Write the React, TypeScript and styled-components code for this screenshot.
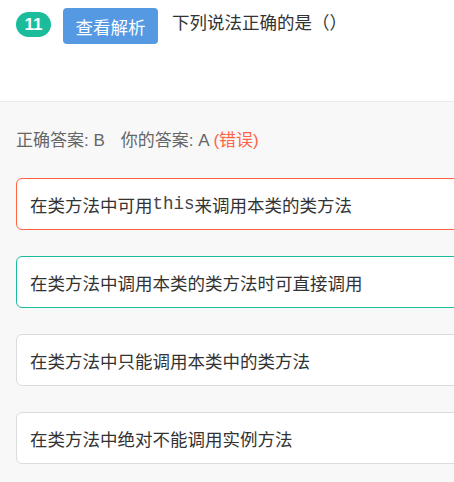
import React from "react";
import styled, { createGlobalStyle } from "styled-components";

const Global = createGlobalStyle`
  html, body {
    margin: 0;
    padding: 0;
    background: #ffffff;
    overflow: hidden;
  }
  body {
    font-family: "Liberation Sans", "Noto Sans CJK SC", sans-serif;
    color: #333333;
  }
`;

const Page = styled.div`
  width: 454px;
  height: 482px;
  overflow: hidden;
  display: flex;
  flex-direction: column;
`;

const Header = styled.div`
  height: 101px;
  box-sizing: border-box;
  display: flex;
  align-items: flex-start;
  padding: 8px 16px 0 16px;
  flex-shrink: 0;
`;

const Badge = styled.span`
  margin-top: 4px;
  width: 35px;
  height: 25px;
  border-radius: 13px;
  background: #1abc9c;
  color: #ffffff;
  font-family: "Liberation Sans", Arial, sans-serif;
  font-weight: bold;
  font-size: 17px;
  display: flex;
  align-items: center;
  justify-content: center;
  flex-shrink: 0;
`;

const ViewButton = styled.button`
  margin-left: 12px;
  width: 95px;
  height: 36px;
  border: none;
  border-radius: 4px;
  background: #5499e1;
  color: #ffffff;
  font-family: "Liberation Sans", "Noto Sans CJK SC", sans-serif;
  font-size: 17.5px;
  padding: 0;
  display: flex;
  align-items: center;
  justify-content: center;
  flex-shrink: 0;
`;

const Question = styled.div`
  margin-left: 14px;
  font-size: 17.5px;
  line-height: 30px;
  color: #333333;
  white-space: nowrap;
`;

const Body = styled.div`
  flex: 1;
  background: #f8f8f8;
  border-top: 1px solid #ebebeb;
  padding: 26px 0 0 16px;
`;

const AnswerLine = styled.div`
  font-size: 17px;
  line-height: 26px;
  color: #666666;
  white-space: nowrap;
`;

const Gap = styled.span`
  display: inline-block;
  width: 16px;
`;

const Wrong = styled.span`
  color: #ff6446;
`;

const Options = styled.div`
  margin-top: 24px;
  width: 520px;
  display: flex;
  flex-direction: column;
  gap: 26px;
`;

type State = "wrong" | "right" | "none";

const borderFor = (s: State) =>
  s === "wrong" ? "#ff6341" : s === "right" ? "#1abc9c" : "#dcdcdc";

const Option = styled.div<{ $state: State }>`
  height: 52px;
  box-sizing: border-box;
  border: 1px solid ${(p) => borderFor(p.$state)};
  border-radius: 6px;
  background: #ffffff;
  display: flex;
  align-items: center;
  padding-left: 13px;
  font-size: 17.5px;
  color: #333333;
  white-space: nowrap;
`;

const Code = styled.span`
  font-family: "Liberation Mono", "Courier New", monospace;
  font-size: 17.5px;
  color: #444444;
`;

export default function App() {
  return (
    <>
      <Global />
      <Page>
        <Header>
          <Badge>11</Badge>
          <ViewButton>查看解析</ViewButton>
          <Question>下列说法正确的是（）</Question>
        </Header>
        <Body>
          <AnswerLine>
            正确答案: B<Gap />你的答案: A <Wrong>(错误)</Wrong>
          </AnswerLine>
          <Options>
            <Option $state="wrong">
              在类方法中可用<Code>this</Code>来调用本类的类方法
            </Option>
            <Option $state="right">在类方法中调用本类的类方法时可直接调用</Option>
            <Option $state="none">在类方法中只能调用本类中的类方法</Option>
            <Option $state="none">在类方法中绝对不能调用实例方法</Option>
          </Options>
        </Body>
      </Page>
    </>
  );
}
